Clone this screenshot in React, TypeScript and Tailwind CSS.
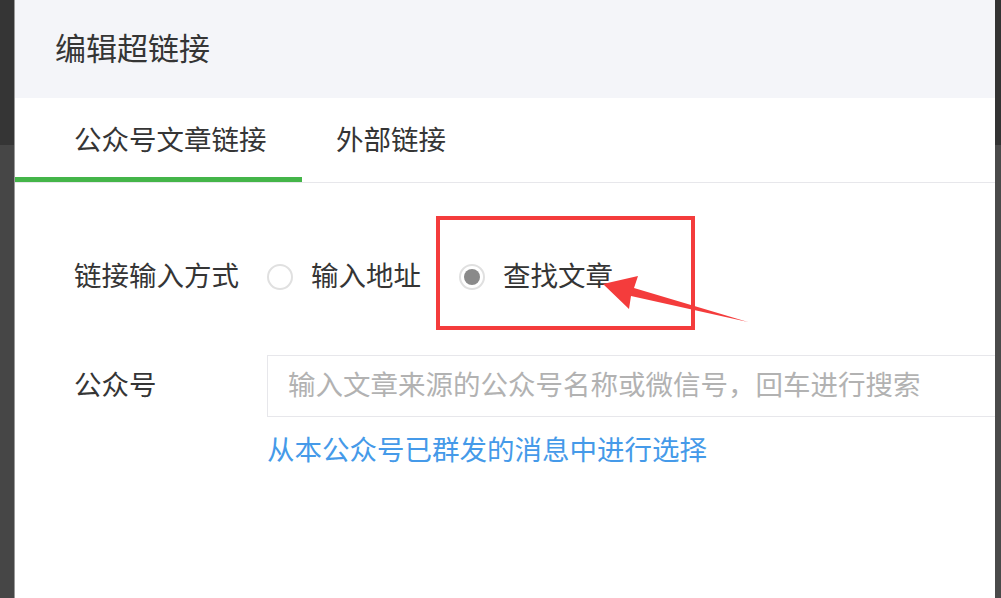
import { useState } from 'react'

const font = "font-['Liberation_Sans','Noto_Sans_CJK_SC',sans-serif]"

function Radio({ checked, label, onClick }: { checked: boolean; label: string; onClick: () => void }) {
  return (
    <button type="button" onClick={onClick} className="flex items-center gap-[18px]">
      <span className="flex h-[26px] w-[26px] items-center justify-center rounded-full border-[2px] border-[#e0e0e0] bg-white">
        {checked && <span className="h-[16px] w-[16px] rounded-full bg-[#8a8a8a]" />}
      </span>
      <span className="text-[27.5px] leading-none text-[#353535]">{label}</span>
    </button>
  )
}

export default function App() {
  const [tab, setTab] = useState(0)
  const [mode, setMode] = useState('search')

  return (
    <div className={`${font} flex h-[598px] w-[1001px] overflow-hidden bg-[#464646]`}>
      {/* 左侧遮罩 */}
      <div className="flex w-[15px] flex-col border-r border-[#9a9a9a]">
        <div className="h-[145px] bg-[#353535]" />
        <div className="flex-1 bg-[#464646]" />
      </div>

      {/* 弹窗 */}
      <div className="relative flex flex-1 flex-col overflow-hidden bg-white">
        <div className="flex h-[98px] shrink-0 items-center bg-[#f4f5f9] pl-[40px]">
          <h1 className="text-[31px] leading-none text-[#353535]">编辑超链接</h1>
        </div>

        {/* 标签页 */}
        <div className="flex h-[85px] shrink-0 border-b border-[#e7e7eb]">
          {['公众号文章链接', '外部链接'].map((t, i) => (
            <button
              key={t}
              type="button"
              onClick={() => setTab(i)}
              className={i === 0 ? 'flex w-[287px] flex-col' : 'flex flex-col px-[34px]'}
            >
              <span
                className={`flex flex-1 items-center pt-[6px] text-[27.5px] leading-none text-[#353535] ${i === 0 ? 'pl-[59px]' : ''}`}
              >
                {t}
              </span>
              <span className={`h-[5px] w-full ${tab === i ? 'bg-[#44b549]' : 'bg-transparent'}`} />
            </button>
          ))}
        </div>

        {/* 表单 */}
        <div className="flex flex-col pl-[59px] pt-[74px]">
          <div className="flex h-[40px] items-center">
            <span className="w-[193px] shrink-0 text-[27.5px] leading-none text-[#353535]">链接输入方式</span>
            <div className="flex items-center gap-[38px]">
              <Radio checked={mode === 'url'} label="输入地址" onClick={() => setMode('url')} />
              <Radio checked={mode === 'search'} label="查找文章" onClick={() => setMode('search')} />
            </div>
          </div>

          <div className="mt-[58px] flex items-center">
            <span className="w-[193px] shrink-0 text-[27.5px] leading-none text-[#353535]">公众号</span>
            <input
              type="text"
              placeholder="输入文章来源的公众号名称或微信号，回车进行搜索"
              className="h-[62px] w-[760px] shrink-0 border border-[#e7e7eb] pl-[20px] text-[27.5px] text-[#353535] outline-none placeholder:text-[#b2b2b2]"
            />
          </div>

          <a href="#" className="ml-[193px] mt-[16px] text-[27.5px] leading-[36px] text-[#459ae9]">
            从本公众号已群发的消息中进行选择
          </a>
        </div>

        {/* 标注 */}
        <div className="pointer-events-none absolute left-[421px] top-[216px] h-[114px] w-[259px] border-[4px] border-[#f43c3c]" />
        <svg
          className="pointer-events-none absolute left-0 top-0"
          width="980"
          height="598"
          viewBox="15 0 980 598"
        >
          <polygon
            points="603,284 638,276 634,288 748,322 631,296 629,309"
            fill="#f43c3c"
          />
        </svg>
      </div>

      {/* 右侧遮罩 */}
      <div className="flex w-[6px] flex-col">
        <div className="h-[145px] bg-[#333333]" />
        <div className="flex-1 bg-[#4a4a4a]" />
      </div>
    </div>
  )
}
